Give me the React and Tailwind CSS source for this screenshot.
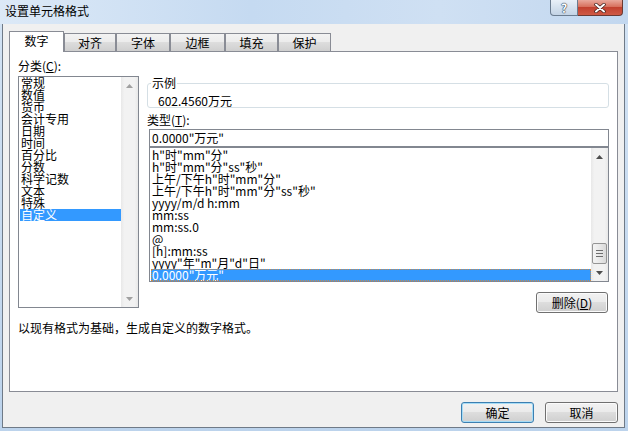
import React from 'react';

const categories = ['常规', '数值', '货币', '会计专用', '日期', '时间', '百分比', '分数', '科学记数', '文本', '特殊', '自定义'];

const formats = [
  'h"时"mm"分"',
  'h"时"mm"分"ss"秒"',
  '上午/下午h"时"mm"分"',
  '上午/下午h"时"mm"分"ss"秒"',
  'yyyy/m/d h:mm',
  'mm:ss',
  'mm:ss.0',
  '@',
  '[h]:mm:ss',
  'yyyy"年"m"月"d"日"',
  '0.0000"万元"',
];

const tabs = [
  { label: '数字', w: 'w-[55px]' },
  { label: '对齐', w: 'w-[52px]' },
  { label: '字体', w: 'w-[54px]' },
  { label: '边框', w: 'w-[55px]' },
  { label: '填充', w: 'w-[53px]' },
  { label: '保护', w: 'w-[53px]' },
];

const Arrow = ({ up, color }) => (
  <svg width="7" height="4" viewBox="0 0 7 4">
    <path d={up ? 'M0 4 L3.5 0 L7 4 Z' : 'M0 0 L3.5 4 L7 0 Z'} fill={color} />
  </svg>
);

const ScrollBar = ({ thumb, color }) => (
  <div className="w-[17px] flex flex-col bg-[linear-gradient(to_right,#e8e8e8,#f2f2f2_20%,#f2f2f2_80%,#e8e8e8)]">
    <div className="h-[17px] flex items-center justify-center">
      <Arrow up color={color} />
    </div>
    <div className="flex-1" />
    {thumb && (
      <div className="h-[21px] mx-[1px] rounded-[2px] border border-[#959595] bg-[linear-gradient(to_right,#f4f4f4,#e9e9e9_50%,#d9d9d9)] flex flex-col items-center justify-center gap-[2px]">
        <div className="w-[7px] h-px bg-[#6e6e6e]" />
        <div className="w-[7px] h-px bg-[#6e6e6e]" />
        <div className="w-[7px] h-px bg-[#6e6e6e]" />
      </div>
    )}
    <div className="h-[17px] flex items-center justify-center">
      <Arrow color={color} />
    </div>
  </div>
);

const Button = ({ children, primary, className = '' }) => (
  <div
    className={`h-[21px] rounded-[3px] border flex items-center justify-center text-[12px] leading-[12px] bg-[linear-gradient(#f2f2f2,#ebebeb_45%,#dddddd_50%,#cfcfcf)] ${
      primary
        ? 'border-[#3c7fb1] shadow-[inset_0_0_0_1px_#a6dcf6]'
        : 'border-[#707070] shadow-[inset_0_0_0_1px_#fbfbfb]'
    } ${className}`}
  >
    {children}
  </div>
);

export default function App() {
  return (
    <div className="w-[628px] h-[431px] flex flex-col bg-[linear-gradient(#d3e3f4,#bcd3ec)] text-black [font-family:'Noto_Sans_CJK_SC','Liberation_Sans',sans-serif] overflow-hidden">
      {/* Title bar */}
      <div className="h-[24px] flex items-start pl-[5px] pr-[5px] bg-[linear-gradient(to_right,#dce9f7,#c5daf1_40%,#cfe0f3_70%,#c2d7ef)]">
        <div className="pt-[4px] text-[12px] leading-[14px]">设置单元格格式</div>
        <div className="ml-auto flex">
          <div className="w-[28px] h-[16px] rounded-bl-[4px] border border-t-0 border-[#6b7c90] bg-[linear-gradient(#e9f0f8,#d5e1ee_50%,#c3d3e5)] flex items-center justify-center text-[12px] leading-[12px] font-bold text-white [text-shadow:0_0_1px_#2b3a4e,0_0_1px_#2b3a4e,0_0_1px_#2b3a4e]">
            ?
          </div>
          <div className="w-[45px] h-[16px] rounded-br-[4px] border border-l-0 border-t-0 border-[#6b3a33] bg-[linear-gradient(#e9a99c,#d7705d_45%,#c2412f_50%,#cf5a45)] flex items-center justify-center">
            <svg width="12" height="10" viewBox="0 0 12 10">
              <path d="M2 1.5 L10 8.5 M10 1.5 L2 8.5" stroke="#3b1d18" strokeWidth="3.4" strokeLinecap="round" />
              <path d="M2 1.5 L10 8.5 M10 1.5 L2 8.5" stroke="#ffffff" strokeWidth="2" strokeLinecap="round" />
            </svg>
          </div>
        </div>
      </div>

      {/* Body */}
      <div className="flex-1 ml-[2px] mr-[3px] mb-[3px] border-x border-b border-[#6f7a87] bg-[#f0f0f0] flex flex-col px-[6px] pt-[7px] pb-[4px]">
        {/* Tabs */}
        <div className="h-[20px] flex items-end">
          {tabs.map((t, i) =>
            i === 0 ? (
              <div
                key={t.label}
                className={`${t.w} h-[21px] -mb-px relative z-10 bg-white border border-b-0 border-[#898c95] flex items-center justify-center text-[12px] leading-[12px] pb-[2px]`}
              >
                {t.label}
              </div>
            ) : (
              <div
                key={t.label}
                className={`${t.w} h-[18px] border border-b-0 border-[#898c95] bg-[linear-gradient(#f3f3f3,#ebebeb_50%,#dddddd_50%,#cfcfcf)] flex items-center justify-center text-[12px] leading-[12px]`}
              >
                {t.label}
              </div>
            )
          )}
        </div>

        {/* Panel */}
        <div className="h-[341px] border border-[#898c95] bg-white flex flex-col px-[8px] pt-[8px]">
          <div className="flex gap-[8px]">
            {/* Category */}
            <div className="w-[121px] flex flex-col">
              <div className="h-[16px] text-[12px] leading-[12px]">
                分类(<span className="underline">C</span>):
              </div>
              <div className="h-[232px] border border-[#828790] flex">
                <div className="flex-1 flex flex-col pl-[1px]">
                  {categories.map((c) => (
                    <div
                      key={c}
                      className={`h-[12px] pl-[1px] text-[12px] leading-[12px] whitespace-nowrap ${
                        c === '自定义' ? 'bg-[#3399ff] text-white' : ''
                      }`}
                    >
                      {c}
                    </div>
                  ))}
                </div>
                <ScrollBar color="#a0a0a0" />
              </div>
            </div>

            {/* Right side */}
            <div className="w-[462px] flex flex-col">
              <fieldset className="mt-[17px] h-[31px] border border-[#d5dfe5] rounded-[3px] pl-[3px]">
                <legend className="px-[1px] text-[12px] leading-[12px]">示例</legend>
                <div className="pt-[6px] pl-[7px] text-[12px] leading-[12px]">602.4560万元</div>
              </fieldset>
              <div className="mt-[6px] h-[15px] text-[12px] leading-[12px]">
                类型(<span className="underline">T</span>):
              </div>
              <div className="ml-[2px] h-[18px] border border-[#828790] flex items-center pl-[2px] text-[12px] leading-[12px]">
                0.0000"万元"
              </div>
              <div className="ml-[2px] h-[135px] border border-[#828790] flex">
                <div className="flex-1 flex flex-col pl-[1px] pt-[1px]">
                  {formats.map((f, i) => (
                    <div
                      key={f}
                      className={`h-[12px] pl-[1px] text-[12px] leading-[12px] whitespace-nowrap ${
                        i === formats.length - 1
                          ? 'bg-[#3399ff] text-white outline-1 outline-dotted outline-[#c98a4a] -outline-offset-1'
                          : ''
                      }`}
                    >
                      {f}
                    </div>
                  ))}
                </div>
                <ScrollBar thumb color="#4d4d4d" />
              </div>
              <Button className="mt-[10px] self-end mr-[1px] w-[72px]">
                删除(<span className="underline">D</span>)
              </Button>
            </div>
          </div>
          <div className="mt-[9px] text-[12px] leading-[12px]">以现有格式为基础，生成自定义的数字格式。</div>
        </div>

        {/* Buttons */}
        <div className="mt-[10px] flex justify-end gap-[11px]">
          <Button primary className="w-[73px]">确定</Button>
          <Button className="w-[73px]">取消</Button>
        </div>
      </div>
    </div>
  );
}
